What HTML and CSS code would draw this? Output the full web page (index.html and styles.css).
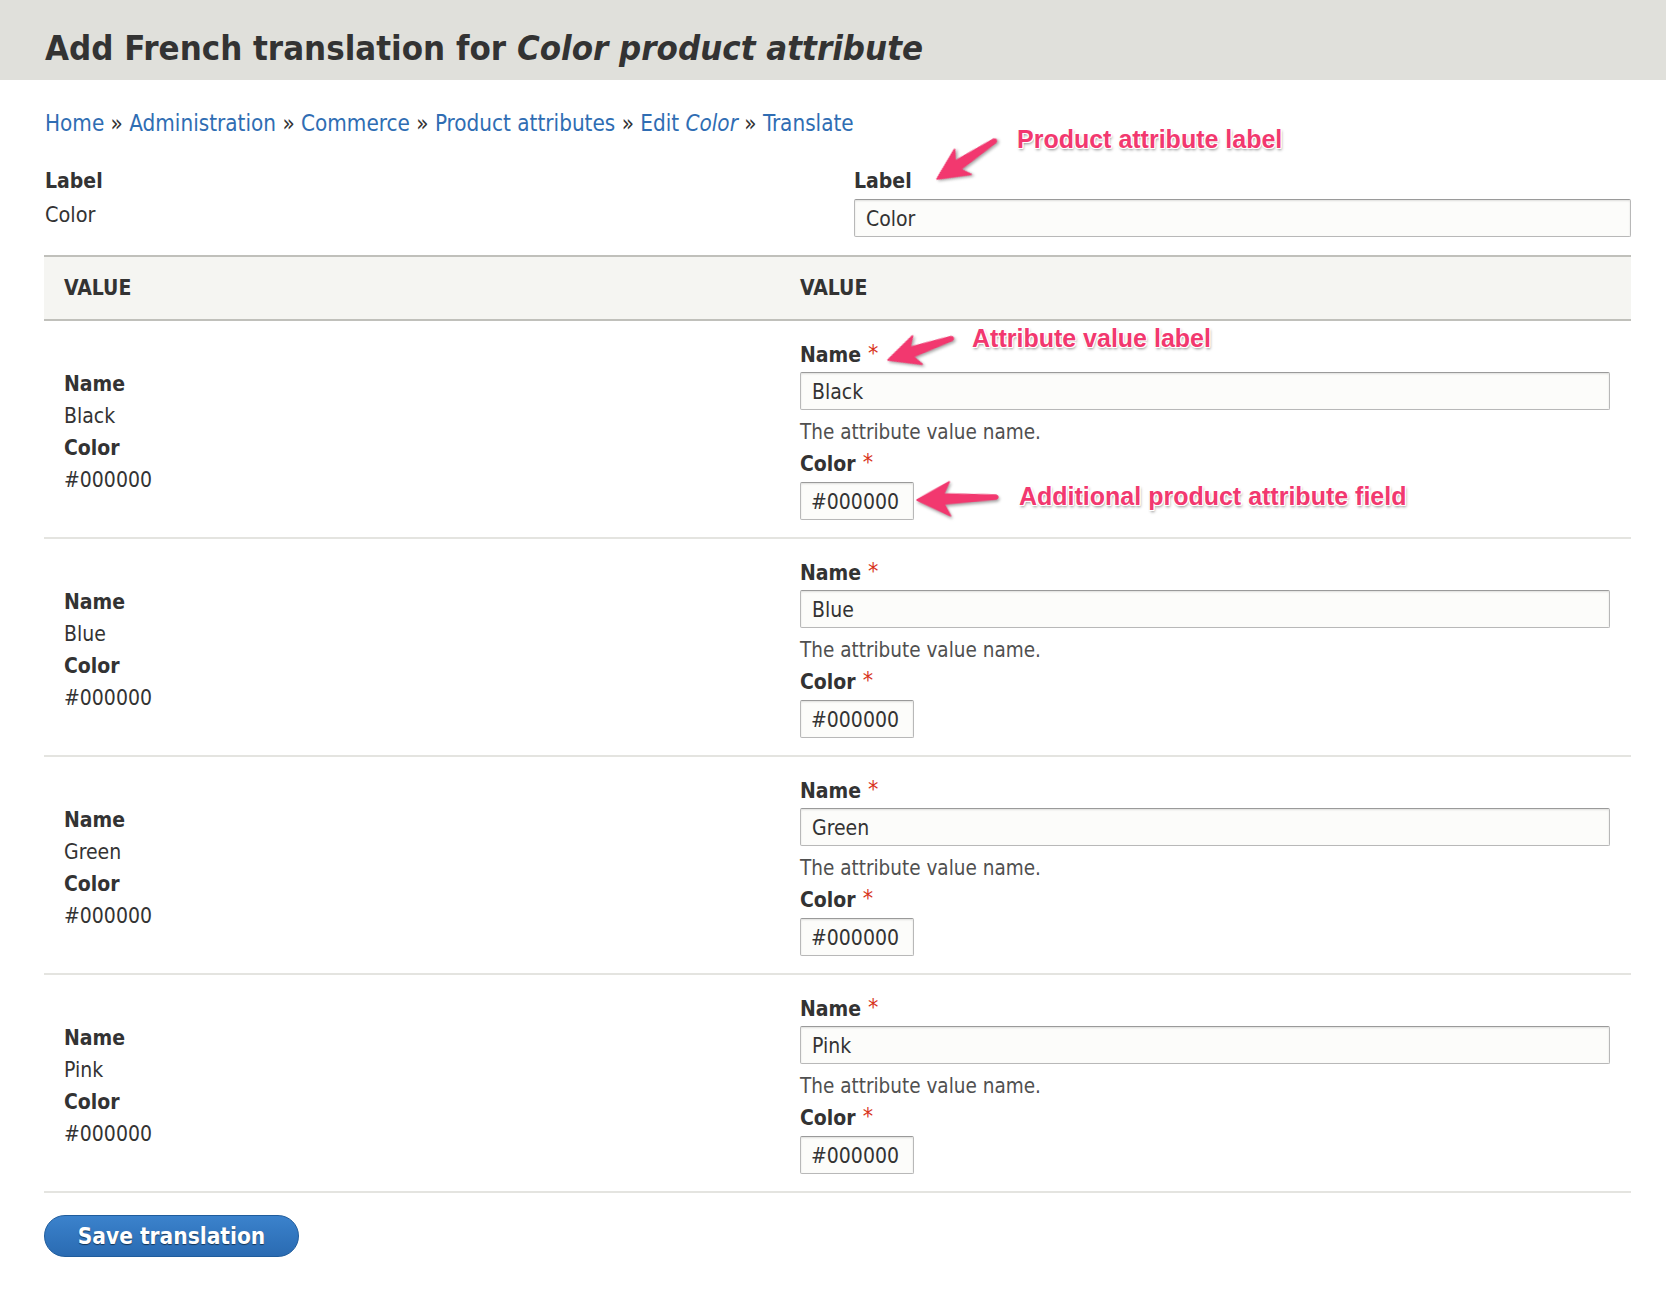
FILE: index.html
```html
<!DOCTYPE html>
<html lang="en">
<head>
<meta charset="utf-8">
<title>Add French translation for Color product attribute</title>
<link rel="stylesheet" href="styles.css">
</head>
<body>
<header class="page-header">
  <h1 class="page-title">Add French translation for <em>Color product attribute</em></h1>
</header>
<main class="page">
  <nav class="breadcrumb">
    <a href="#">Home</a> » <a href="#">Administration</a> » <a href="#">Commerce</a> » <a href="#">Product attributes</a> » <a href="#">Edit <em>Color</em></a> » <a href="#">Translate</a>
  </nav>

  <div class="top-row">
    <div class="source">
      <div class="source-label">Label</div>
      <div>Color</div>
    </div>
    <div class="target">
      <label class="field-label">Label</label>
      <input class="text-input wide" type="text" value="Color">
    </div>
  </div>

  <table class="values">
    <thead>
      <tr><th class="col-src">Value</th><th>Value</th></tr>
    </thead>
    <tbody>
      <tr>
        <td class="col-src"><b>Name</b><br>Black<br><b>Color</b><br>#000000</td>
        <td class="col-tgt">
          <label class="field-label">Name<span class="req">*</span></label>
          <input class="text-input full" type="text" value="Black">
          <div class="description">The attribute value name.</div>
          <label class="field-label">Color<span class="req">*</span></label>
          <input class="text-input short" type="text" value="#000000">
        </td>
      </tr>
      <tr>
        <td class="col-src"><b>Name</b><br>Blue<br><b>Color</b><br>#000000</td>
        <td class="col-tgt">
          <label class="field-label">Name<span class="req">*</span></label>
          <input class="text-input full" type="text" value="Blue">
          <div class="description">The attribute value name.</div>
          <label class="field-label">Color<span class="req">*</span></label>
          <input class="text-input short" type="text" value="#000000">
        </td>
      </tr>
      <tr>
        <td class="col-src"><b>Name</b><br>Green<br><b>Color</b><br>#000000</td>
        <td class="col-tgt">
          <label class="field-label">Name<span class="req">*</span></label>
          <input class="text-input full" type="text" value="Green">
          <div class="description">The attribute value name.</div>
          <label class="field-label">Color<span class="req">*</span></label>
          <input class="text-input short" type="text" value="#000000">
        </td>
      </tr>
      <tr>
        <td class="col-src"><b>Name</b><br>Pink<br><b>Color</b><br>#000000</td>
        <td class="col-tgt">
          <label class="field-label">Name<span class="req">*</span></label>
          <input class="text-input full" type="text" value="Pink">
          <div class="description">The attribute value name.</div>
          <label class="field-label">Color<span class="req">*</span></label>
          <input class="text-input short" type="text" value="#000000">
        </td>
      </tr>
    </tbody>
  </table>

  <button class="button-primary" type="button">Save translation</button>
</main>

<div class="annotations">
  <svg class="arrows" width="1666" height="600" viewBox="0 0 1666 600" aria-hidden="true">
    <g class="arrow" transform="translate(937,179) rotate(-33.5)">
      <path d="M0,0 L31,-15 L25,-5 L69,-2 Q73,0 69,2 L25,5 L31,15 Z"/>
    </g>
    <g class="arrow" transform="translate(888,360) rotate(-18.7)">
      <path d="M0,0 L31,-15 L25,-5 L67,-2 Q71,0 67,2 L25,5 L31,15 Z"/>
    </g>
    <g class="arrow" transform="translate(917,500) rotate(-2.1)">
      <path d="M0,0 L33,-17 L27,-5 L79,-2 Q83,0 79,2 L27,5 L33,17 Z"/>
    </g>
  </svg>
  <span class="note note-1">Product attribute label</span>
  <span class="note note-2">Attribute value label</span>
  <span class="note note-3">Additional product attribute field</span>
</div>
</body>
</html>
```

FILE: styles.css
```css
* {
  box-sizing: border-box;
}

body {
  position: relative;
  margin: 0;
  background: #fff;
  color: #333;
  font-family: "DejaVu Sans Condensed", "DejaVu Sans", sans-serif;
  font-size: 21px;
  line-height: 30px;
}

.page-header {
  height: 80px;
  padding: 28px 0 0 45px;
  background: #e0e0db;
}

.page-title {
  margin: 0;
  font-size: 34.5px;
  line-height: 40px;
  font-weight: bold;
  color: #333;
}

.page-title em {
  font-style: italic;
}

.page {
  padding: 0 35px 40px 44px;
}

.breadcrumb {
  margin-top: 28px;
  padding-left: 1px;
  font-size: 22.3px;
  line-height: 30px;
  color: #333;
}

.breadcrumb a {
  color: #2f6db3;
  text-decoration: none;
}

.top-row {
  display: grid;
  grid-template-columns: 810px 1fr;
  margin-top: 27px;
}

.source {
  padding-left: 1px;
  line-height: 33px;
  font-size: 21.5px;
}

.source-label {
  font-weight: bold;
  font-size: 21px;
}

.target {
  padding-top: 1px;
}

.field-label {
  display: block;
  font-weight: bold;
  line-height: 30px;
  color: #333;
}

.req {
  display: inline-block;
  margin-left: 7px;
  color: #d8351c;
  font-weight: normal;
  font-size: 23px;
  line-height: 10px;
  vertical-align: top;
  position: relative;
  top: 8px;
}

.text-input {
  display: block;
  height: 38px;
  padding: 2px 11px 0;
  border: 1px solid #b8b8b8;
  border-top-color: #9a9a9a;
  border-radius: 2px;
  background: #fcfcfa;
  box-shadow: inset 0 1px 2px rgba(0, 0, 0, 0.12);
  font-family: inherit;
  font-size: 21px;
  color: #333;
  margin-top: 3px;
}

.text-input.wide {
  width: 777px;
}

.text-input.full {
  width: 810px;
  margin-top: 2px;
}

.text-input.short {
  width: 114px;
  padding: 2px 10px 0;
}

.values {
  width: 100%;
  margin-top: 18px;
  border-collapse: separate;
  border-spacing: 0;
}

.values th {
  padding: 16px 20px;
  border-top: 2px solid #c0c0bb;
  border-bottom: 2px solid #c0c0bb;
  background: #f5f5f2;
  text-align: left;
  text-transform: uppercase;
  font-weight: bold;
  line-height: 30px;
}

.values th.col-src,
.values td.col-src {
  width: 736px;
}

.values td {
  border-bottom: 2px solid #e4e4e0;
}

.values td.col-src {
  padding: 5px 20px 0;
  vertical-align: middle;
  line-height: 32px;
}

.values td.col-tgt {
  padding: 19px 21px 17px 20px;
  vertical-align: top;
}

.description {
  margin-top: 7px;
  margin-bottom: 2px;
  font-size: 20.5px;
  color: #505050;
}

.button-primary {
  display: block;
  width: 255px;
  height: 42px;
  margin-top: 22px;
  padding: 0;
  border: 1px solid #1f5c9c;
  border-radius: 21px;
  background: linear-gradient(#3b82cc, #2a6bb2);
  color: #fff;
  font-family: inherit;
  font-size: 22.5px;
  font-weight: bold;
  text-shadow: 0 1px 1px rgba(0, 0, 0, 0.55);
  cursor: pointer;
}

.annotations {
  position: absolute;
  top: 0;
  left: 0;
  width: 1666px;
  height: 600px;
  pointer-events: none;
}

.arrows {
  position: absolute;
  top: 0;
  left: 0;
  overflow: visible;
}

.arrow path {
  fill: #f2386f;
  stroke: #f2386f;
  stroke-width: 1.5;
  stroke-linejoin: round;
  filter: drop-shadow(1px 2px 1.5px rgba(0, 0, 0, 0.35));
}

.note {
  position: absolute;
  font-family: "Liberation Sans", Arial, sans-serif;
  font-weight: bold;
  font-size: 25px;
  line-height: 28px;
  color: #f2386f;
  white-space: nowrap;
  text-shadow:
    1px 0 0 #fff, -1px 0 0 #fff, 0 1px 0 #fff, 0 -1px 0 #fff,
    1px 1px 0 #fff, -1px -1px 0 #fff, 1px -1px 0 #fff, -1px 1px 0 #fff,
    1px 2px 3px rgba(0, 0, 0, 0.45);
}

.note-1 {
  left: 1017px;
  top: 125px;
}

.note-2 {
  left: 972px;
  top: 324px;
}

.note-3 {
  left: 1019px;
  top: 482px;
}
```
